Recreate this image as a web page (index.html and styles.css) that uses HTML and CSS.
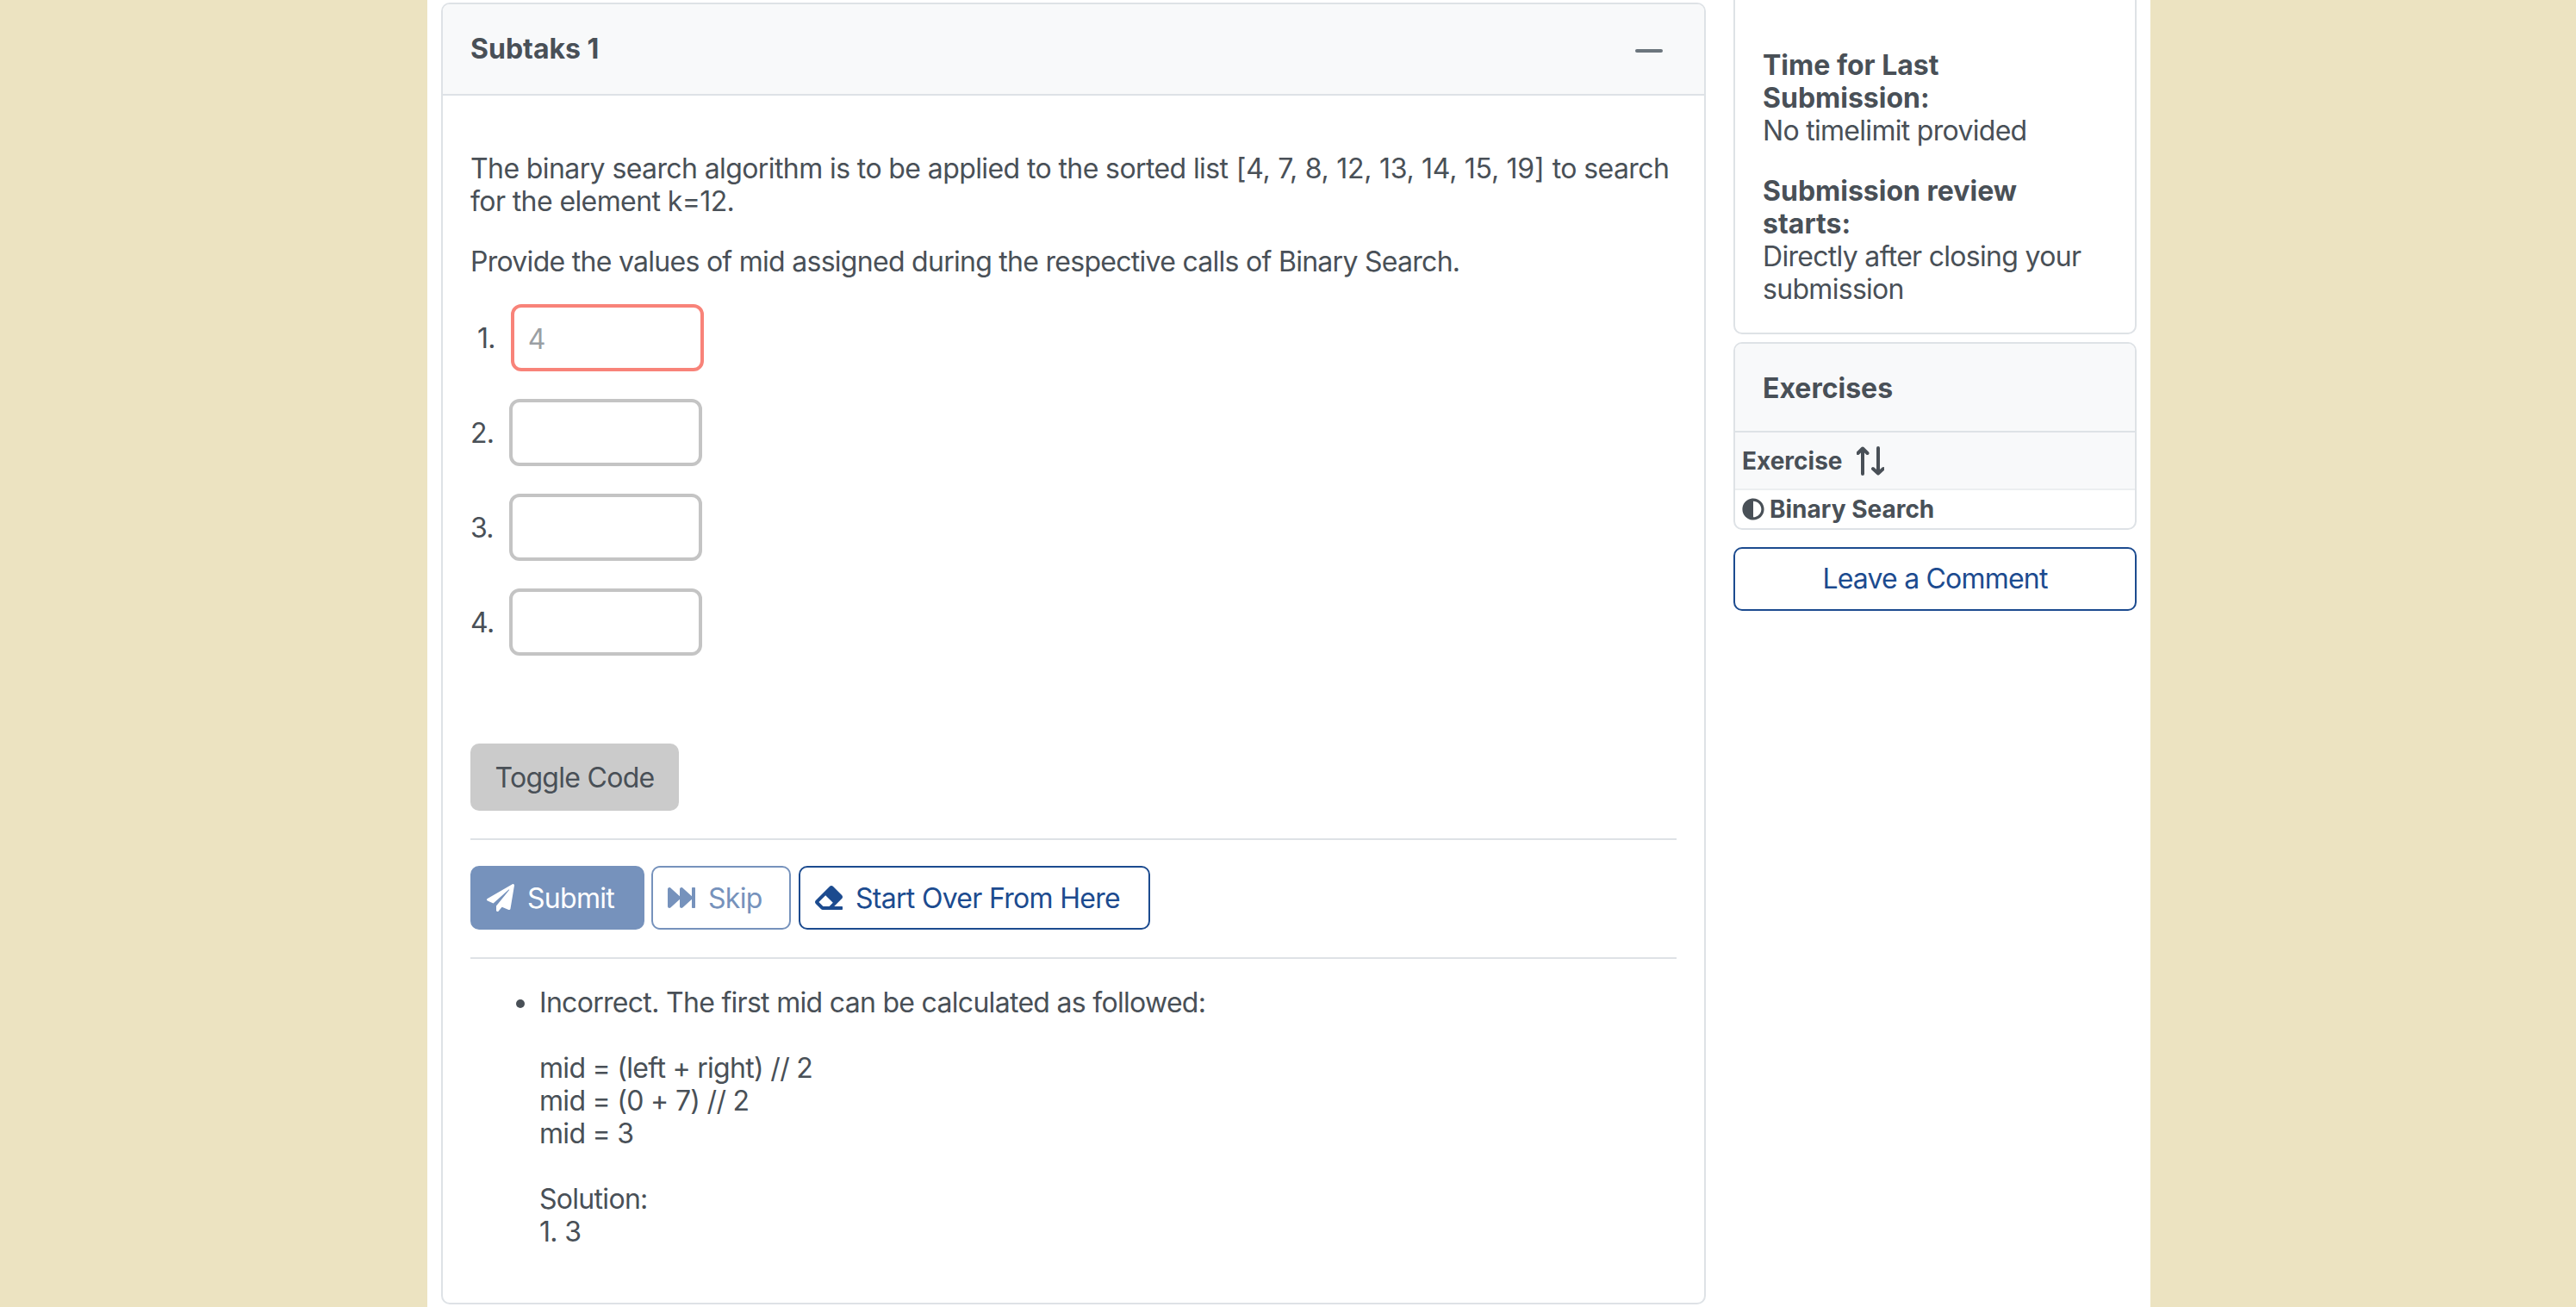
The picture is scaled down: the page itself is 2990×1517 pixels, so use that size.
FILE: index.html
```html
<!DOCTYPE html>
<html lang="en">
<head>
    <meta charset="UTF-8">
    <meta name="viewport" content="width=device-width, initial-scale=1.0">
    <title>Binary Search</title>
    <link rel="stylesheet" href="styles.css">
</head>
<body>
    <main class="page">
        <section class="card task">
            <header class="card-header task-header">
                <h2 class="card-title">Subtaks 1</h2>
                <span class="collapse-icon"></span>
            </header>
            <div class="task-body">
                <p class="question question-first">The binary search algorithm is to be applied to the sorted list <span class="numbers">[4, 7, 8, 12, 13, 14, 15, 19]</span> to search<br>for the element k=12.</p>
                <p class="question">Provide the values of mid assigned during the respective calls of Binary Search.</p>

                <div class="answers">
                    <div class="answer answer-first">
                        <label for="a1">1.</label>
                        <input id="a1" class="answer-input wrong" type="text" placeholder="4">
                    </div>
                    <div class="answer">
                        <label for="a2">2.</label>
                        <input id="a2" class="answer-input" type="text">
                    </div>
                    <div class="answer">
                        <label for="a3">3.</label>
                        <input id="a3" class="answer-input" type="text">
                    </div>
                    <div class="answer">
                        <label for="a4">4.</label>
                        <input id="a4" class="answer-input" type="text">
                    </div>
                </div>

                <button class="btn-toggle">Toggle Code</button>

                <div class="actions">
                    <button class="btn btn-submit">
                        <svg class="icon" viewBox="0 0 512 512"><path d="M476 3.2L12.5 270.6c-18.1 10.4-15.8 35.6 2.2 43.2L121 358.4l287.3-253.2c5.5-4.9 13.3 2.6 8.6 8.3L176 407v80.5c0 23.6 28.5 32.9 42.5 15.8L282 426l124.6 52.2c14.2 6 30.4-2.9 33-18.2l72-432C515 7.8 493.3-6.8 476 3.2z"/></svg>
                        Submit
                    </button>
                    <button class="btn btn-skip">
                        <svg class="icon" viewBox="0 0 512 512"><path d="M512 76v360c0 6.6-5.4 12-12 12h-40c-6.6 0-12-5.4-12-12V284.1L276.5 440.6c-20.6 17.2-52.5 2.8-52.5-24.6V284.1L52.5 440.6C31.9 457.8 0 443.4 0 416V96c0-27.4 31.9-41.7 52.5-24.6L224 226.8V96c0-27.4 31.9-41.7 52.5-24.6L448 226.8V76c0-6.6 5.4-12 12-12h40c6.6 0 12 5.4 12 12z"/></svg>
                        Skip
                    </button>
                    <button class="btn btn-outline">
                        <svg class="icon" viewBox="0 0 512 512"><path d="M497.941 273.941c18.745-18.745 18.745-49.137 0-67.882l-160-160c-18.745-18.745-49.136-18.746-67.883 0l-256 256c-18.745 18.745-18.745 49.137 0 67.882l96 96A48.004 48.004 0 0 0 144 480h356c6.627 0 12-5.373 12-12v-40c0-6.627-5.373-12-12-12H355.883l142.058-142.059zm-302.627-62.627l137.373 137.373L265.373 416H150.628l-80-80 124.686-124.686z"/></svg>
                        Start Over From Here
                    </button>
                </div>

                <ul class="feedback">
                    <li>Incorrect. The first mid can be calculated as followed:<br><br>mid = (left + right) // 2<br>mid = (0 + 7) // 2<br>mid = 3<br><br>Solution:<br>1. 3</li>
                </ul>
            </div>
        </section>

        <aside class="sidebar">
            <section class="card info">
                <p class="info-item"><strong>Time for Last Submission:</strong><br>No timelimit provided</p>
                <p class="info-item"><strong>Submission review starts:</strong><br>Directly after closing your submission</p>
            </section>

            <section class="card exercises">
                <header class="card-header exercises-header">
                    <h2 class="card-title">Exercises</h2>
                </header>
                <div class="exercise-head">
                    Exercise
                    <svg class="sort-icon" viewBox="0 0 32 34"><path d="M7 32V2.5M1.5 8L7 2.5 12.5 8M25 2v29.5M19 26l6 5.5 6-5.5"/></svg>
                </div>
                <div class="exercise-row">
                    <svg class="half-icon" viewBox="0 0 512 512"><path d="M8 256c0 136.966 111.033 248 248 248s248-111.034 248-248S392.966 8 256 8 8 119.033 8 256zm248 184V72c101.705 0 184 82.311 184 184 0 101.705-82.311 184-184 184z"/></svg>
                    Binary Search
                </div>
            </section>

            <button class="btn-comment">Leave a Comment</button>
        </aside>
    </main>
</body>
</html>
```

FILE: styles.css
```css
* {
    box-sizing: border-box;
}

html, body {
    margin: 0;
    padding: 0;
    height: 100%;
    overflow: hidden;
    background: #ece3c1;
}

body {
    font-family: Inter, "Liberation Sans", sans-serif;
    font-size: 32px;
    line-height: 38px;
    letter-spacing: -0.7px;
    color: #495057;
}

strong {
    letter-spacing: 0;
}

.page {
    width: 2000px;
    height: 100vh;
    margin-left: 496px;
    padding: 3px 16px 0;
    background: #fff;
    display: grid;
    grid-template-columns: 1468px 468px;
    gap: 32px;
    align-items: start;
}

.card {
    background: #fff;
    border: 2px solid #dee2e6;
    border-radius: 10px;
    overflow: hidden;
}

.card-header {
    background: #f8f9fa;
    border-bottom: 2px solid #dee2e6;
}

.card-title {
    margin: 0;
    font-size: 32px;
    line-height: 38px;
    font-weight: 700;
    letter-spacing: 0;
}

/* tarefa */
.task {
    height: 1511px;
}

.task-header {
    height: 106px;
    padding: 0 32px;
    display: flex;
    justify-content: space-between;
    align-items: center;
}

.collapse-icon {
    width: 32px;
    height: 4px;
    margin-right: 16px;
    margin-top: 4px;
    border-radius: 2px;
    background: #6c757d;
}

.task-body {
    padding: 66px 32px 0;
}

.question {
    margin: 0 0 30px;
    letter-spacing: -0.72px;
}

.question-first {
    margin-bottom: 32px;
    letter-spacing: -0.6px;
}

.numbers {
    margin: 0 1px;
    letter-spacing: -0.27px;
}

.answer {
    display: flex;
    align-items: center;
    gap: 18px;
    height: 78px;
    margin-bottom: 32px;
}

.answer label {
    padding-top: 2px;
}

.answer-first {
    padding-left: 8px;
}

.answer-input {
    width: 224px;
    height: 78px;
    padding: 2px 16px 0;
    border: 4px solid #c4c4c4;
    border-radius: 12px;
    outline: none;
    font: inherit;
    letter-spacing: inherit;
    color: #495057;
}

.answer-input::placeholder {
    color: #9b9fa4;
}

.answer-input.wrong {
    border-color: #f88379;
}

.btn-toggle {
    display: block;
    width: 242px;
    height: 78px;
    margin-top: 102px;
    padding-top: 2px;
    border: none;
    border-radius: 10px;
    background: #cbcbcb;
    font: inherit;
    letter-spacing: inherit;
    color: #495057;
}

.actions {
    display: flex;
    gap: 8px;
    margin-top: 32px;
    padding: 30px 0 32px;
    border-top: 2px solid #dee2e6;
    border-bottom: 2px solid #dee2e6;
}

.btn {
    display: flex;
    align-items: center;
    gap: 15px;
    height: 74px;
    padding: 2px 16px 0 17px;
    border: 2px solid #1c4b8f;
    border-radius: 10px;
    background: #fff;
    font: inherit;
    letter-spacing: inherit;
    white-space: nowrap;
    color: #1c4b8f;
}

.btn-submit {
    width: 202px;
    background: #7692bc;
    border-color: #7692bc;
    color: #fff;
}

.btn-skip {
    width: 162px;
    border-color: #7692bc;
    color: #7692bc;
}

.btn-outline {
    width: 408px;
    margin-left: 1px;
}

.icon {
    width: 32px;
    height: 32px;
    margin-top: -2px;
    fill: currentColor;
    flex: none;
}

.feedback {
    margin: 32px 0 0;
    padding-left: 80px;
}

/* coluna da direita */
.sidebar {
    margin-top: -3px;
}

.info {
    height: 388px;
    padding: 57px 32px 0;
    border-top: none;
    border-radius: 0 0 10px 10px;
}

.info-item {
    margin: 0 0 32px;
}

.exercises {
    margin-top: 9px;
}

.exercises-header {
    height: 103px;
    padding: 33px 32px 0;
}

.exercise-head {
    display: flex;
    align-items: center;
    gap: 16px;
    height: 67px;
    padding-left: 8px;
    background: #f8f9fa;
    border-bottom: 2px solid #eceef0;
    font-size: 28px;
    font-weight: 700;
    letter-spacing: 0;
}

.sort-icon {
    width: 32px;
    height: 34px;
    fill: none;
    stroke: #495057;
    stroke-width: 4;
    stroke-linecap: round;
    stroke-linejoin: round;
}

.exercise-row {
    display: flex;
    align-items: center;
    gap: 6px;
    height: 44px;
    padding-left: 8px;
    font-size: 28px;
    font-weight: 700;
    letter-spacing: 0;
}

.half-icon {
    width: 26px;
    height: 26px;
    fill: #495057;
}

.btn-comment {
    display: block;
    width: 100%;
    height: 74px;
    margin-top: 20px;
    border: 2px solid #1c4b8f;
    border-radius: 10px;
    background: #fff;
    font: inherit;
    letter-spacing: -0.8px;
    color: #1c4b8f;
}
```
